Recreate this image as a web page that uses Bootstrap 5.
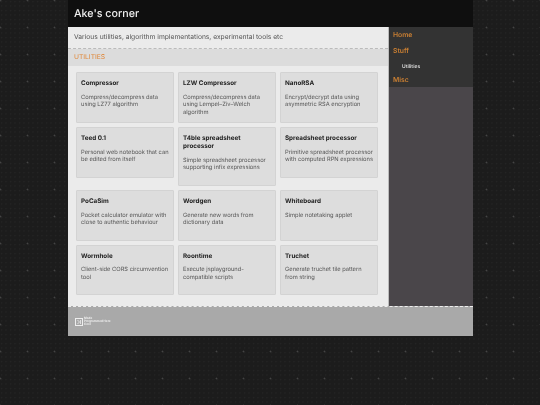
<!DOCTYPE html>
<html lang="en">
<head>
<meta charset="utf-8">
<title>Ake's corner</title>
<link href="https://cdn.jsdelivr.net/npm/bootstrap@5.3.0/dist/css/bootstrap.min.css" rel="stylesheet">
<style>
html,body{height:100%}
body{font-family:Inter,"Liberation Sans",sans-serif;font-size:7px;line-height:7.6px;color:#555;text-rendering:geometricPrecision;background-color:#1c1c1c;background-image:radial-gradient(circle at 1.5px 1.5px,#444 0,#444 .6px,transparent 1.2px),radial-gradient(circle at 1.5px 1.5px,#262626 .5px,transparent 1px);background-size:27px 27px,4.5px 4.5px;background-position:-1px -1px,0 0}
.frame{width:405px;margin-left:68px;filter:blur(.25px)}
.masthead{height:27px;background:#0f0f0f;color:#eee;font-size:10.7px;line-height:27px;padding-left:6px;font-weight:500}
.mainpane{width:320px;background:#ebebeb}
.intro{height:21px;line-height:21px;padding-left:6px;font-size:6.7px;color:#555;border-bottom:1px dashed #bbb;box-sizing:content-box}
.sechead{height:17px;line-height:17px;padding-left:6px;background:#dcdcdc;color:#e0883a;font-size:6.7px}
.cardgrid{padding:6.3px 8px 11px;column-gap:4px;row-gap:4px;align-items:flex-start;align-content:flex-start}
.toolcard{width:98px;min-height:50.7px;background:#dddddd;border:1px solid #d3d3d3;border-radius:1px;padding:6px 2.5px 5px 4px}
.toolcard h6{font-size:6.3px;line-height:8px;font-weight:700;color:#222;margin:0 0 6.6px}
.toolcard p{margin:0;color:#555;font-size:5.75px;line-height:7.6px}
.toolcard.tall{min-height:59px}
.sidepane{width:85px;background:#4a464a;border-left:1px solid #bbb}
.sidenav{background:#333;padding:4px 5px 3px 4px;height:60px}
.sidenav a{display:block;text-decoration:none;color:#c97f33;font-size:6.8px;font-weight:600;line-height:8px;margin:0 0 8px}
.sidenav a.sub{color:#ddd;font-size:5px;font-weight:600;margin-left:9px;margin-bottom:5px}
.sidenav a:last-child{margin-bottom:0}
.pagefoot{height:29.5px;background:#a9a9a9;border-top:1px dashed #eee;padding-left:7px;gap:1px}
.logotext{color:#eee;font-size:3px;line-height:3px;font-weight:700;white-space:nowrap}
</style>
</head>
<body>
<div class="frame">
  <header class="masthead">Ake's corner</header>
  <div class="d-flex">
    <main class="mainpane">
      <div class="intro">Various utilities, algorithm implementations, experimental tools etc</div>
      <div class="sechead">UTILITIES</div>
      <div class="cardgrid d-flex flex-wrap">
        <div class="toolcard"><h6>Compressor</h6><p>Compress/decompress data using LZ77 algorithm</p></div>
        <div class="toolcard"><h6>LZW Compressor</h6><p>Compress/decompress data using Lempel–Ziv–Welch algorithm</p></div>
        <div class="toolcard"><h6>NanoRSA</h6><p>Encrypt/decrypt data using asymmetric RSA encryption</p></div>
        <div class="toolcard"><h6>Teed 0.1</h6><p>Personal web notebook that can be edited from itself</p></div>
        <div class="toolcard tall"><h6>T4ble spreadsheet processor</h6><p>Simple spreadsheet processor supporting infix expressions</p></div>
        <div class="toolcard"><h6>Spreadsheet processor</h6><p>Primitive spreadsheet processor with computed RPN expressions</p></div>
        <div class="toolcard"><h6>PoCaSim</h6><p>Pocket calculator emulator with close to authentic behaviour</p></div>
        <div class="toolcard"><h6>Wordgen</h6><p>Generate new words from dictionary data</p></div>
        <div class="toolcard"><h6>Whiteboard</h6><p>Simple notetaking applet</p></div>
        <div class="toolcard"><h6>Wormhole</h6><p>Client-side CORS circumvention tool</p></div>
        <div class="toolcard"><h6>Roontime</h6><p>Execute jsplayground-compatible scripts</p></div>
        <div class="toolcard"><h6>Truchet</h6><p>Generate truchet tile pattern from string</p></div>
      </div>
    </main>
    <aside class="sidepane">
      <nav class="sidenav">
        <a href="#">Home</a>
        <a href="#">Stuff</a>
        <a href="#" class="sub">Utilities</a>
        <a href="#">Misc</a>
      </nav>
    </aside>
  </div>
  <footer class="pagefoot d-flex align-items-center">
    <svg width="8" height="8" viewBox="0 0 8 8" aria-hidden="true"><rect x=".5" y=".5" width="7" height="7" fill="none" stroke="#eee"/><path d="M2.5 2l2 2-2 2M5.5 2v4" fill="none" stroke="#eee" stroke-width=".8"/></svg>
    <div class="logotext">Made<br>Programmed Here<br>Cool</div>
  </footer>
</div>
<script src="https://cdn.jsdelivr.net/npm/bootstrap@5.3.0/dist/js/bootstrap.bundle.min.js"></script>
</body>
</html>
